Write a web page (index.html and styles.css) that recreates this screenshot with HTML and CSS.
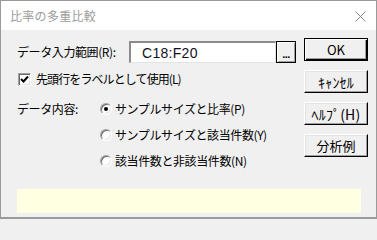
FILE: index.html
```html
<!DOCTYPE html>
<html lang="ja">
<head>
<meta charset="utf-8">
<title>比率の多重比較</title>
<link rel="stylesheet" href="styles.css">
</head>
<body>
<div class="window">
  <div class="titlebar">
    <span class="title">比率の多重比較</span>
    <svg class="close" width="11" height="11" viewBox="0 0 11 11"><path d="M0.5 0.5 L10.5 10.5 M10.5 0.5 L0.5 10.5" stroke="#8a8a8a" stroke-width="1" fill="none"/></svg>
  </div>
  <div class="content">
    <div class="main">
      <div class="left">
        <div class="range-row">
          <span class="label range-label">データ入力範囲(R):</span>
          <div class="input"><span class="input-text">C18:F20</span></div>
          <div class="btn dots">...</div>
        </div>
        <div class="check-row">
          <span class="checkbox"><svg width="9" height="9" viewBox="0 0 9 9"><path d="M1 4 L3.5 6.5 L8 1.5" stroke="#000" stroke-width="2" fill="none"/></svg></span>
          <span class="label check-label">先頭行をラベルとして使用(L)</span>
        </div>
        <div class="data-row">
          <span class="label data-label">データ内容:</span>
          <div class="radios">
            <div class="radio-row"><span class="radio checked"></span><span class="label">サンプルサイズと比率(P)</span></div>
            <div class="radio-row"><span class="radio"></span><span class="label">サンプルサイズと該当件数(Y)</span></div>
            <div class="radio-row"><span class="radio"></span><span class="label">該当件数と非該当件数(N)</span></div>
          </div>
        </div>
      </div>
      <div class="buttons">
        <div class="btn default">OK</div>
        <div class="btn kana">ｷｬﾝｾﾙ</div>
        <div class="btn kana">ﾍﾙﾌﾟ(H)</div>
        <div class="btn">分析例</div>
      </div>
    </div>
    <div class="message"></div>
  </div>
</div>
</body>
</html>
```
FILE: styles.css
```css
* { box-sizing: border-box; }
html, body { margin: 0; padding: 0; }
body {
  width: 377px;
  height: 219px;
  overflow: hidden;
  background: #f0f0f0;
  font-family: "Noto Sans CJK JP", sans-serif;
  font-size: 12px;
  font-weight: 400;
  color: #000;
}
.window {
  width: 377px;
  height: 219px;
  border: 1px solid #9a9a9a;
  border-bottom-width: 2px;
  background: #f0f0f0;
  display: flex;
  flex-direction: column;
}
.titlebar {
  height: 29px;
  background: #fff;
  display: flex;
  align-items: center;
  justify-content: space-between;
  padding: 0 10px 0 9px;
  flex: none;
}
.title {
  color: #9b9b9b;
  font-size: 12px;
  letter-spacing: 0.3px;
}
.close { display: block; margin-top: 1px; }
.content {
  flex: 1;
  padding: 8px 7px 0 16px;
  display: flex;
  flex-direction: column;
}
.main {
  display: flex;
  justify-content: space-between;
}
.left {
  display: flex;
  flex-direction: column;
}
.label {
  letter-spacing: -0.4px;
  line-height: 16px;
  white-space: nowrap;
}
.check-label { letter-spacing: -0.9px; }
.range-row {
  margin-top: 3px;
  display: flex;
  align-items: center;
  height: 22px;
}
.range-label { width: 112px; }
.input {
  width: 147px;
  height: 22px;
  background: #fff;
  border-top: 2px solid #8c8c8c;
  border-left: 2px solid #8c8c8c;
  border-right: 1px solid #e3e3e3;
  border-bottom: 1px solid #e3e3e3;
  padding-left: 11px;
  display: flex;
  align-items: center;
}
.input-text {
  font-family: "Liberation Sans", sans-serif;
  font-size: 14px;
  color: #101020;
  line-height: 16px;
  padding-top: 1px;
  letter-spacing: 0.3px;
}
.btn {
  background: #f0f0f0;
  border-top: 1px solid #fff;
  border-left: 1px solid #fff;
  border-right: 1px solid #000;
  border-bottom: 1px solid #000;
  box-shadow: inset -1px -1px 0 #a0a0a0, inset 1px 1px 0 #e3e3e3;
  display: flex;
  align-items: center;
  justify-content: center;
  width: 64px;
  height: 23px;
  font-size: 13px;
  line-height: 16px;
  font-weight: 400;
}
.kana {
  font-size: 14px;
  letter-spacing: 0.2px;
}
.dots {
  width: 20px;
  height: 22px;
  border: 1px solid #000;
  box-shadow: inset 1px 1px 0 #fff, inset -1px -1px 0 #a0a0a0;
  font-family: "Liberation Sans", sans-serif;
  font-size: 11px;
  font-weight: bold;
  align-items: flex-end;
  padding-bottom: 4px;
  line-height: 8px;
  letter-spacing: -0.5px;
}
.default {
  border: 1px solid #000;
  box-shadow: inset 1px 1px 0 #fff, inset -1px -1px 0 #000, inset -2px -2px 0 #a0a0a0;
  font-family: "Noto Sans CJK JP", sans-serif;
  font-size: 13px;
}
.buttons {
  display: flex;
  flex-direction: column;
  gap: 9px;
  margin-right: 1px;
}
.check-row {
  margin-top: 8px;
  display: flex;
  align-items: center;
  height: 16px;
  padding-left: 1px;
}
.checkbox {
  width: 13px;
  height: 13px;
  background: #fff;
  border-top: 1px solid #a0a0a0;
  border-left: 1px solid #a0a0a0;
  border-right: 1px solid #fff;
  border-bottom: 1px solid #fff;
  box-shadow: inset 1px 1px 0 #696969, inset -1px -1px 0 #e3e3e3;
  display: flex;
  align-items: center;
  justify-content: center;
  margin-right: 5px;
}
.checkbox svg { display: block; }
.data-row {
  margin-top: 14px;
  display: flex;
}
.data-label { width: 83px; }
.radios {
  display: flex;
  flex-direction: column;
  gap: 10px;
}
.radio-row {
  display: flex;
  align-items: center;
  height: 16px;
}
.radio {
  width: 12px;
  height: 12px;
  border-radius: 50%;
  background: #fff;
  border: 1px solid #a0a0a0;
  border-bottom-color: #fff;
  border-right-color: #fff;
  box-shadow: inset 1px 1px 0 #696969, inset -1px -1px 0 #e3e3e3;
  margin-right: 3px;
  position: relative;
}
.radio.checked::after {
  content: "";
  position: absolute;
  left: 3px;
  top: 3px;
  width: 4px;
  height: 4px;
  border-radius: 50%;
  background: #000;
}
.message {
  margin-top: 20px;
  width: 344px;
  height: 24px;
  background: #ffffe1;
}
```
